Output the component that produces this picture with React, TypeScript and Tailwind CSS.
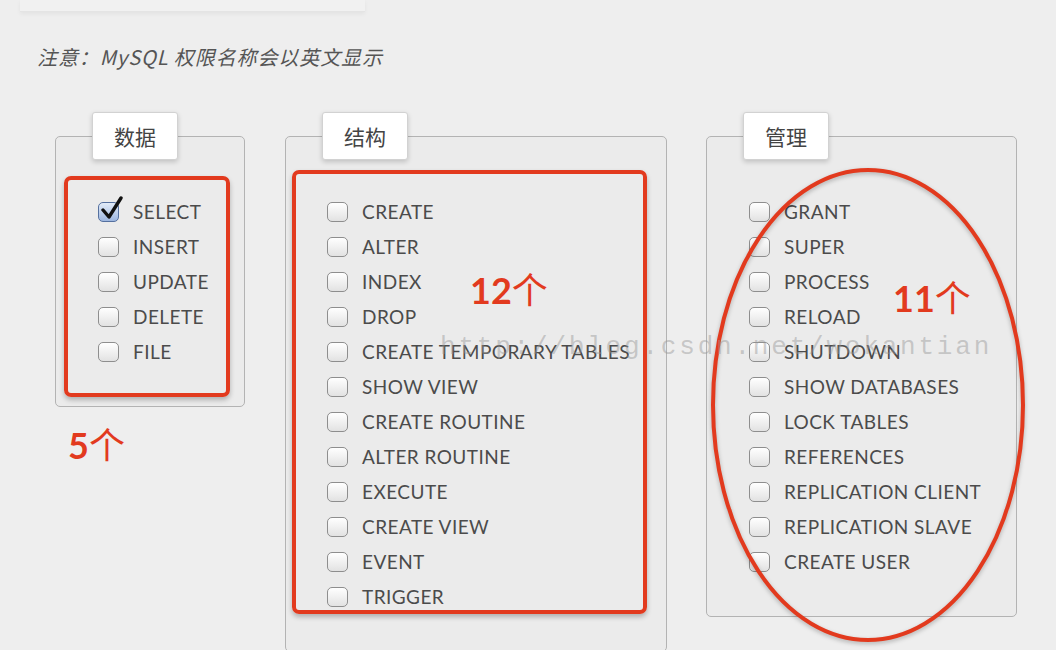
import React from 'react';

const dataPrivs = ['SELECT', 'INSERT', 'UPDATE', 'DELETE', 'FILE'];
const structPrivs = [
  'CREATE',
  'ALTER',
  'INDEX',
  'DROP',
  'CREATE TEMPORARY TABLES',
  'SHOW VIEW',
  'CREATE ROUTINE',
  'ALTER ROUTINE',
  'EXECUTE',
  'CREATE VIEW',
  'EVENT',
  'TRIGGER',
];
const adminPrivs = [
  'GRANT',
  'SUPER',
  'PROCESS',
  'RELOAD',
  'SHUTDOWN',
  'SHOW DATABASES',
  'LOCK TABLES',
  'REFERENCES',
  'REPLICATION CLIENT',
  'REPLICATION SLAVE',
  'CREATE USER',
];

function Checkbox({ checked }: { checked?: boolean }) {
  if (checked) {
    return (
      <span className="relative block h-[20px] w-[21px] shrink-0 rounded-[5px] border border-[#55709f] bg-linear-to-b from-[#e3ecf8] to-[#9db6df]">
        <svg className="absolute -top-[7px] left-[1px] h-[26px] w-[24px]" viewBox="0 0 24 26">
          <path d="M3 14 L9 21 L21 2" fill="none" stroke="#111" strokeWidth="3.4" strokeLinecap="round" strokeLinejoin="round" />
        </svg>
      </span>
    );
  }
  return (
    <span className="block h-[20px] w-[21px] shrink-0 rounded-[5px] border border-[#8e8e8e] bg-linear-to-b from-white to-[#e2e2e2]" />
  );
}

function Row({ label, checked }: { label: string; checked?: boolean }) {
  return (
    <div className="flex h-[35px] items-center gap-[14px]">
      <Checkbox checked={checked} />
      <span className="whitespace-nowrap text-[19px] leading-none tracking-[0.45px] text-[#4b4b4b]">{label}</span>
    </div>
  );
}

function Legend({ title }: { title: string }) {
  return (
    <legend className="ml-[36px] block h-[48px] w-[86px] rounded-[3px] border border-[#d2d2d2] bg-white text-[#444] shadow-[0_2px_5px_rgba(0,0,0,0.18)]">
      <div className="flex h-full w-full items-center justify-center text-[21px] leading-none">{title}</div>
    </legend>
  );
}

function Count({ n }: { n: string }) {
  return (
    <span className="whitespace-nowrap text-[36px] leading-none text-[#e23a1e]">
      <span className="font-bold">{n}</span>
      <span>个</span>
    </span>
  );
}

export default function App() {
  return (
    <div className="relative h-[650px] w-[1056px] overflow-hidden bg-[#eeeeee] font-['Lato','Noto_Sans_CJK_SC',sans-serif]">
      <div className="ml-[20px] h-[12px] w-[345px] border-b border-[#e4e4e4] bg-[#f1f1f1] shadow-[0_2px_4px_rgba(0,0,0,0.05)]" />

      <p className="ml-[37px] mt-[31px] text-[20px] italic leading-[28px] tracking-[0.9px] text-[#555] font-['Noto_Sans_CJK_SC',sans-serif]">
        注意：MySQL 权限名称会以英文显示
      </p>

      <div className="mt-[41px] flex items-start pl-[55px]">
        <div className="flex flex-col">
          <fieldset className="w-[190px] rounded-[5px] border border-[#b3b3b3] bg-[#ebebeb]">
            <Legend title="数据" />
            <div className="relative pb-[37px] pl-[42px] pt-[34px]">
              {dataPrivs.map((p, i) => (
                <Row key={p} label={p} checked={i === 0} />
              ))}
              <div className="absolute left-[8px] top-[16px] h-[221px] w-[166px] rounded-[7px] border-4 border-[#e23a1e] shadow-[0_3px_5px_rgba(0,0,0,0.25)]" />
            </div>
          </fieldset>
          <div className="ml-[13px] mt-[20px]">
            <Count n="5" />
          </div>
        </div>

        <fieldset className="ml-[40px] w-[382px] rounded-[5px] border border-[#b3b3b3] bg-[#ebebeb]">
          <Legend title="结构" />
          <div className="relative pb-[37px] pl-[41px] pt-[34px]">
            {structPrivs.map((p) => (
              <Row key={p} label={p} />
            ))}
            <div className="absolute left-[6px] top-[10px] h-[444px] w-[355px] rounded-[7px] border-4 border-[#e23a1e] shadow-[0_3px_5px_rgba(0,0,0,0.25)]" />
            <div className="absolute left-[184px] top-[112px]">
              <Count n="12" />
            </div>
          </div>
        </fieldset>

        <fieldset className="ml-[39px] w-[311px] rounded-[5px] border border-[#b3b3b3] bg-[#ebebeb]">
          <Legend title="管理" />
          <div className="relative pb-[37px] pl-[42px] pt-[34px]">
            {adminPrivs.map((p) => (
              <Row key={p} label={p} />
            ))}
            <div className="absolute left-[186px] top-[120px]">
              <Count n="11" />
            </div>
          </div>
        </fieldset>
      </div>

      <svg className="pointer-events-none absolute left-0 top-0 h-[650px] w-[1056px]" viewBox="0 0 1056 650">
        <ellipse cx="868" cy="405" rx="155" ry="235" fill="none" stroke="#e23a1e" strokeWidth="4" style={{ filter: 'drop-shadow(0 2px 2px rgba(0,0,0,0.25))' }} />
      </svg>

      <div className="pointer-events-none absolute left-[440px] top-[334px] whitespace-nowrap font-['Liberation_Mono',monospace] text-[26px] leading-none tracking-[2.8px] text-[rgba(150,150,150,0.45)]">
        http://blog.csdn.net/wokantian
      </div>
    </div>
  );
}
